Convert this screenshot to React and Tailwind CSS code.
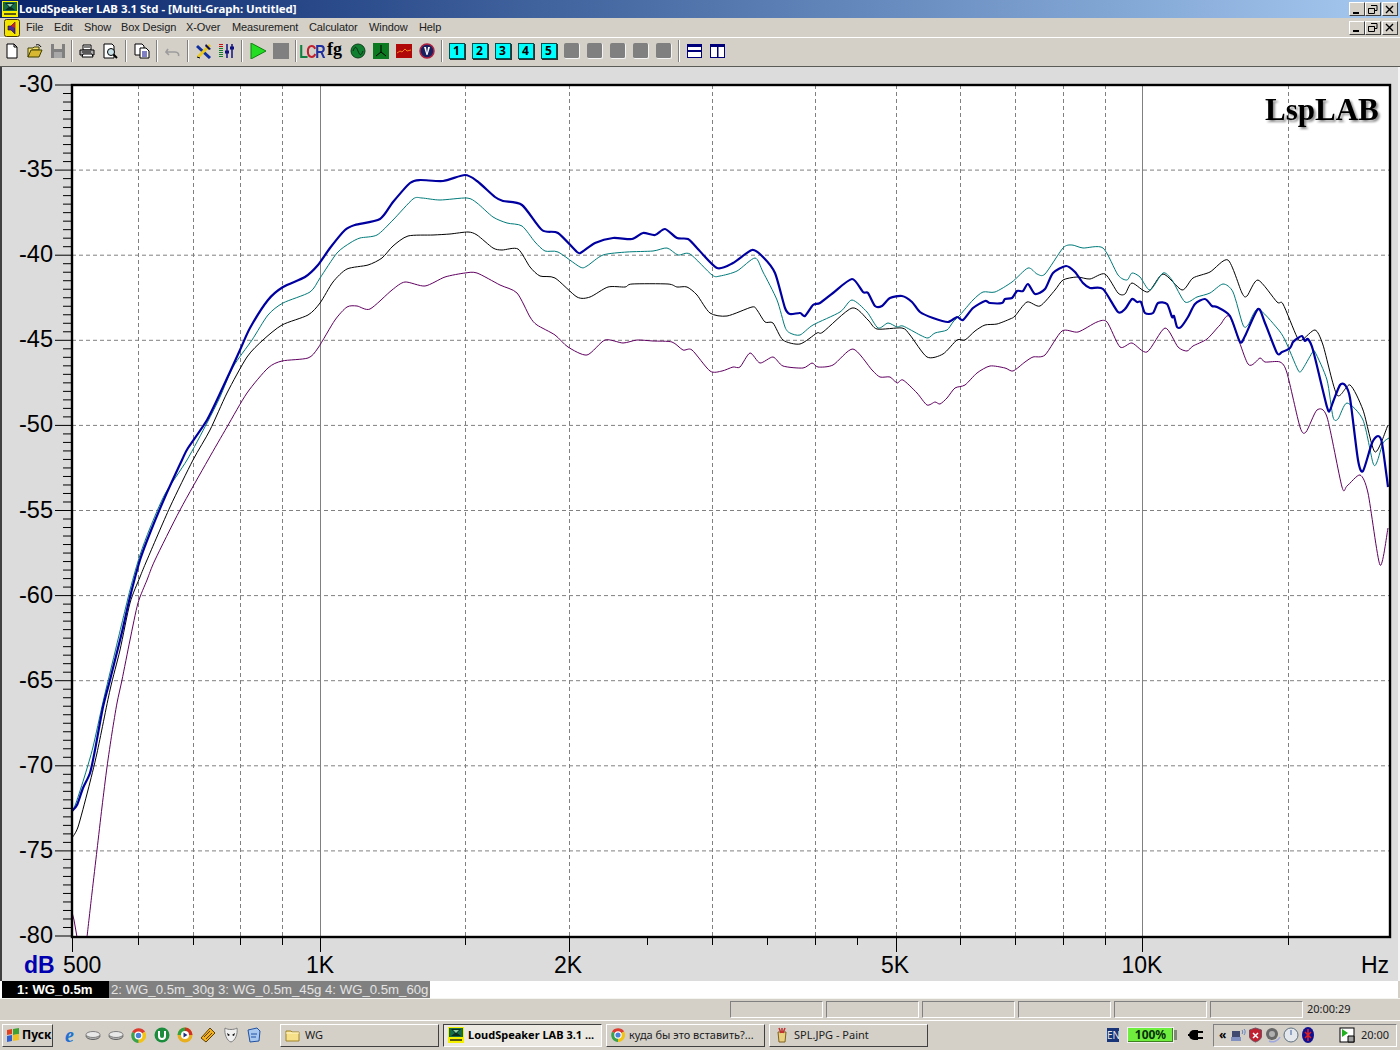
import React from 'react';

const ui = { fontFamily: '"Noto Sans", "Liberation Sans", sans-serif' };

const blue = '72,811 77,805 83,788 90,773 95,750 103,707 110,680 115,660 122,632 130,597 140,560 150,533 165,497 182,460 188,448 207,420 223,387 240,350 250,328 268,300 283,287 305,277 318,265 330,248 345,230 355,225 380,219 393,202 410,183 420,180 443,181 465,175 477,181 495,197 503,201 522,205 542,230 558,233 577,252 582,252 595,243 613,238 632,239 643,233 655,235 665,229 677,238 688,239 697,248 717,268 733,263 752,250 763,257 775,273 785,308 790,314 800,313 805,316 813,305 820,303 833,293 852,279 863,292 868,293 875,306 882,306 890,298 902,296 912,302 920,312 933,318 948,322 957,317 963,320 973,308 985,301 990,303 1002,303 1005,299 1012,298 1017,291 1023,291 1028,284 1035,294 1045,289 1053,273 1066,266 1075,272 1083,283 1090,288 1103,289 1118,312 1125,309 1132,299 1137,302 1141,302 1145,313 1153,313 1158,303 1167,304 1172,317 1174,316 1177,327 1181,327 1188,317 1195,304 1205,299 1212,306 1217,307 1230,316 1240,342 1245,336 1258,309 1265,323 1277,353 1282,352 1290,348 1293,342 1298,338 1302,336 1305,341 1308,339 1313,350 1327,407 1330,410 1333,402 1340,385 1345,385 1350,398 1358,460 1363,471 1372,443 1378,436 1382,443 1388,487';
const teal = '72,812 76,803 85,775 93,747 103,702 115,652 130,590 140,555 150,528 165,494 187,460 207,423 220,397 233,367 252,340 268,315 283,303 310,292 320,278 337,253 350,243 360,238 377,235 393,220 413,199 422,198 440,200 467,198 477,203 493,217 507,223 522,226 535,242 545,251 558,252 580,267 587,266 603,255 627,252 653,251 667,248 678,255 690,254 712,275 720,276 737,271 755,258 763,272 777,300 785,327 790,333 800,335 813,325 840,312 852,300 867,312 878,328 888,323 897,327 903,326 920,335 928,338 935,333 947,330 953,322 960,315 973,300 983,292 995,292 1012,282 1028,268 1037,274 1045,274 1063,248 1072,245 1083,248 1103,248 1118,275 1127,280 1132,273 1140,277 1150,290 1163,273 1172,280 1185,302 1197,297 1210,293 1223,284 1233,292 1243,325 1248,325 1258,309 1277,328 1285,340 1298,370 1302,370 1312,353 1315,352 1327,380 1333,417 1338,419 1347,403 1363,420 1373,463 1377,462 1383,443 1389,438';
const black = '72,838 78,827 88,790 97,753 110,690 120,650 130,603 140,577 147,560 170,507 193,460 210,430 227,393 247,357 263,340 282,325 308,315 320,303 333,282 347,269 368,265 382,258 393,246 408,236 433,235 450,234 468,232 477,235 493,248 502,250 518,249 530,267 540,276 555,278 577,297 590,297 608,287 625,287 632,284 668,284 677,287 687,287 697,295 710,313 727,316 752,307 757,310 765,322 773,323 783,340 800,344 817,333 823,332 852,308 868,320 877,329 902,328 910,335 927,357 943,354 957,340 965,340 975,331 985,325 997,324 1010,319 1015,316 1027,302 1040,306 1055,290 1063,280 1077,277 1090,279 1105,274 1118,293 1125,294 1132,283 1148,292 1163,274 1182,290 1193,278 1210,272 1228,260 1242,293 1247,296 1258,280 1277,302 1283,304 1297,337 1302,340 1315,330 1323,345 1337,395 1350,385 1363,410 1375,452 1388,425';
const purple = '87,937 92,893 97,850 102,807 107,767 112,733 117,703 122,680 130,640 138,603 147,580 155,560 180,510 208,460 227,427 247,393 268,368 282,361 308,358 318,348 335,320 347,307 357,306 370,309 392,290 405,282 425,286 445,277 465,273 477,273 500,285 517,293 530,317 537,325 555,335 568,347 587,355 605,340 623,343 637,340 653,341 672,342 683,350 692,350 710,371 722,371 733,367 740,367 750,353 760,363 773,357 783,366 803,368 812,363 818,367 833,365 853,349 872,370 880,377 890,377 897,383 903,380 917,393 927,405 935,402 940,404 947,398 955,388 965,385 977,373 990,366 1005,368 1013,371 1025,362 1033,357 1045,355 1062,331 1078,332 1097,322 1107,322 1120,347 1132,343 1147,352 1165,328 1178,347 1187,351 1193,346 1207,339 1220,325 1230,317 1248,364 1260,358 1265,362 1280,362 1287,373 1300,427 1306,432 1317,410 1327,417 1342,487 1347,486 1360,475 1368,493 1380,565 1388,528';

// spline through the digitized points so that peaks stay where they were read
function smooth(str) {
  const p = str.split(' ').map(s => s.split(',').map(Number));
  let d = `M${p[0][0]} ${p[0][1]}`;
  for (let i = 0; i < p.length - 1; i++) {
    const a = p[i - 1] || p[i];
    const b = p[i];
    const c = p[i + 1];
    const e = p[i + 2] || c;
    const c1x = b[0] + (c[0] - a[0]) / 8;
    const c1y = b[1] + (c[1] - a[1]) / 8;
    const c2x = c[0] - (e[0] - b[0]) / 8;
    const c2y = c[1] - (e[1] - b[1]) / 8;
    d += `C${c1x} ${c1y} ${c2x} ${c2y} ${c[0]} ${c[1]}`;
  }
  return d;
}

const gridX = [138, 193, 240, 282, 465, 569, 712, 815, 896, 960, 1015, 1063, 1105, 1288];
const bottomTicks = [138, 193, 240, 282, 465, 647, 712, 767, 815, 857, 960, 1015, 1063, 1105, 1288];
const longTicks = [72, 320, 569, 896, 1142];
const dbLabels = [-30, -35, -40, -45, -50, -55, -60, -65, -70, -75, -80];
const yOf = i => 85 + i * 85.1;

function Chart() {
  const sans = '"Liberation Sans", Arial, sans-serif';
  const minor = [];
  for (let i = 1; i < 100; i++) if (i % 10 !== 0) minor.push(85 + i * 8.51);
  return (
    <svg width="1396" height="914" viewBox="2 67 1396 914" className="block">
      <rect x="72" y="85" width="1318" height="852" fill="#fff" />
      {dbLabels.slice(1, -1).map((d, i) => (
        <line key={d} x1="72" x2="1390" y1={yOf(i + 1)} y2={yOf(i + 1)} stroke="#808080" strokeDasharray="4 3" />
      ))}
      {gridX.map(x => (
        <line key={x} x1={x + 0.5} x2={x + 0.5} y1="85" y2="937" stroke="#808080" strokeDasharray="4 3" />
      ))}
      <line x1="320.5" x2="320.5" y1="85" y2="937" stroke="#808080" />
      <line x1="1142.5" x2="1142.5" y1="85" y2="937" stroke="#808080" />

      {minor.map(y => <line key={y} x1="63" x2="72" y1={y} y2={y} stroke="#000" />)}
      {dbLabels.map((d, i) => (
        <g key={d}>
          <line x1="55" x2="72" y1={yOf(i)} y2={yOf(i)} stroke="#000" />
          <text x="53" y={yOf(i) + 7} textAnchor="end" fontFamily={sans} fontSize="23.5" fill="#000">{d}</text>
        </g>
      ))}
      {bottomTicks.map(x => <line key={x} x1={x + 0.5} x2={x + 0.5} y1="937" y2="945" stroke="#000" />)}
      {longTicks.map(x => <line key={x} x1={x + 0.5} x2={x + 0.5} y1="937" y2="952" stroke="#000" />)}

      <svg x="72" y="85" width="1318" height="852" viewBox="72 85 1318 852">
        <polyline points="72,912 74,920 77,937" fill="none" stroke="#600060" />
        <path d={smooth(purple)} fill="none" stroke="#600060" />
        <path d={smooth(black)} fill="none" stroke="#000" />
        <path d={smooth(teal)} fill="none" stroke="#007a7a" />
        <path d={smooth(blue)} fill="none" stroke="#0000a0" strokeWidth="2.2" />
      </svg>

      <rect x="72" y="85" width="1318" height="852" fill="none" stroke="#000" strokeWidth="2.4" />
      <text x="1265" y="120" fontFamily='"Liberation Serif", serif' fontWeight="700" fontSize="31" fill="#000" className="drop-shadow-[2px_2px_1px_#8a8a8a]">LspLAB</text>
      <text x="24" y="973" fontFamily={sans} fontWeight="700" fontSize="23" fill="#0000b0">dB</text>
      <text x="63" y="973" fontFamily={sans} fontSize="23" fill="#000">500</text>
      <text x="320" y="973" textAnchor="middle" fontFamily={sans} fontSize="23" fill="#000">1K</text>
      <text x="568" y="973" textAnchor="middle" fontFamily={sans} fontSize="23" fill="#000">2K</text>
      <text x="895" y="973" textAnchor="middle" fontFamily={sans} fontSize="23" fill="#000">5K</text>
      <text x="1142" y="973" textAnchor="middle" fontFamily={sans} fontSize="23" fill="#000">10K</text>
      <text x="1361" y="973" fontFamily={sans} fontSize="23" fill="#000">Hz</text>
    </svg>
  );
}

function Ico({ w = 16, h = 16, children }) {
  return <svg width={w} height={h} viewBox={`0 0 ${w} ${h}`} className="block shrink-0">{children}</svg>;
}

function AppIcon({ size = 16 }) {
  return (
    <svg width={size} height={size} viewBox="0 0 16 16" className="block shrink-0">
      <rect width="16" height="16" fill="#f4f000" />
      <rect x="1" y="1" width="14" height="9" fill="#146c4a" />
      <path d="M3 2h10L9 6l4 3H3l4-3z" fill="#0c2c20" />
      <path d="M5 3h6L8 6z" fill="#8fd0a8" />
      <rect x="2" y="12" width="12" height="2" fill="#5a5a10" />
    </svg>
  );
}

function MdiIcon() {
  return (
    <Ico w={16} h={18}>
      <rect x="0.5" y="0.5" width="15" height="17" rx="2" fill="#f2e400" stroke="#4a3a00" />
      <path d="M4 7h3l4-4v12l-4-4H4z" fill="#4a2a90" stroke="#200040" strokeWidth="0.6" />
      <path d="M7 7l4-4v6z" fill="#d02020" />
    </Ico>
  );
}

function Chrome({ size = 14 }) {
  return (
    <svg width={size} height={size} viewBox="0 0 16 16" className="block shrink-0">
      <path d="M8 8L1.2 4.2A8 8 0 0 1 15 4z" fill="#dc3b2e" />
      <path d="M8 8L15 4A8 8 0 0 1 8 16z" fill="#f2c316" />
      <path d="M8 8L8 16A8 8 0 0 1 1.2 4.2z" fill="#3aa24a" />
      <circle cx="8" cy="8" r="3.6" fill="#4a80d8" stroke="#fff" strokeWidth="1.3" />
    </svg>
  );
}

function Folder({ size = 16 }) {
  return (
    <svg width={size} height={size} viewBox="0 0 16 16" className="block shrink-0">
      <path d="M1 4h5l1 1h7v9H1z" fill="#f7e08a" stroke="#a08428" />
      <path d="M1 6h13" stroke="#fff5c8" />
    </svg>
  );
}

function NumBtn({ n }) {
  return (
    <div className="w-[23px] h-[26px] flex items-center justify-center">
      <div className="w-[16px] h-[16px] bg-[#00ffff] border border-[#005050] shadow-[1px_1px_0_#303030] flex items-center justify-center text-[12px] leading-none font-bold text-black">{n}</div>
    </div>
  );
}

function Slot({ children }) {
  return <div className="w-[23px] h-[26px] flex items-center justify-center shrink-0">{children}</div>;
}

function Sep({ w = 8 }) {
  return (
    <div style={{ width: w }} className="h-[26px] flex items-center justify-center shrink-0">
      <div className="w-[2px] h-[22px] border-l border-r border-l-[#808080] border-r-white" />
    </div>
  );
}

function Toolbar() {
  return (
    <div className="h-[28px] flex items-start bg-[#d4d0c8]">
      <Slot><Ico><path d="M3 1h7l3 3v11H3z" fill="#fff" stroke="#000" /><path d="M10 1v3h3" fill="none" stroke="#000" /></Ico></Slot>
      <Slot><Ico><path d="M1 5h5l1-1h5v3H5L1 14z" fill="#f4e070" stroke="#404000" /><path d="M1 14l3-7h11l-3 7z" fill="#d8b830" stroke="#404000" /><path d="M9 2c2-1 4 0 5 2" fill="none" stroke="#000" /></Ico></Slot>
      <Slot><Ico><rect x="1" y="1" width="14" height="14" fill="#808080" /><rect x="4" y="1" width="8" height="5" fill="#d4d0c8" /><rect x="4" y="9" width="8" height="6" fill="#a8a8a8" /></Ico></Slot>
      <Sep w={6} />
      <Slot><Ico><path d="M4 2h8v5H4z" fill="#fff" stroke="#000" /><path d="M1 7h14v5H1z" fill="#b0b0b0" stroke="#000" /><path d="M4 11h9l1 3H3z" fill="#fff" stroke="#000" /><path d="M5 4h6M3 9h9" stroke="#000" /></Ico></Slot>
      <Slot><Ico><path d="M2 1h8l2 2v12H2z" fill="#fff" stroke="#000" /><circle cx="9" cy="9" r="3.5" fill="#c8e0e8" stroke="#000" /><path d="M11.5 11.5L15 15" stroke="#000" strokeWidth="2" /></Ico></Slot>
      <Sep w={9} />
      <Slot><Ico><path d="M1 1h7l2 2v9H1z" fill="#fff" stroke="#000" /><path d="M6 5h6l3 3v7H6z" fill="#fff" stroke="#000" /><path d="M8 9h5M8 11h5M8 13h5" stroke="#00008a" /></Ico></Slot>
      <Sep w={8} />
      <Slot><Ico><path d="M3 6L1 9l3 3M1.5 9H10c3 0 4 2 3.5 4" fill="none" stroke="#9c9c9c" strokeWidth="1.6" /></Ico></Slot>
      <Sep w={8} />
      <Slot><Ico><path d="M1 3l13 12" stroke="#1030a0" strokeWidth="3" /><path d="M14 2L2 14" stroke="#e8c820" strokeWidth="3" /><path d="M10 1l5 5-2 1-4-4z" fill="#101050" /><path d="M1 14l3 1" stroke="#000" /></Ico></Slot>
      <Slot>
        <Ico>
          <path d="M2 1v4" stroke="#c01010" strokeWidth="4" strokeDasharray="1 1" />
          <path d="M2 5v10" stroke="#108030" strokeWidth="4" strokeDasharray="1 1" />
          <path d="M8 1v14M13 1v14" stroke="#101080" strokeWidth="1.5" />
          <path d="M6 9h4M11 5h4" stroke="#101080" strokeWidth="3" />
        </Ico>
      </Slot>
      <Sep w={8} />
      <Slot><Ico><path d="M1 0l15 8-15 8z" fill="#22dd22" stroke="#108010" /></Ico></Slot>
      <Slot><div className="w-[16px] h-[16px] bg-[#808080]" /></Slot>
      <Sep w={8} />
      <Slot>
        <span className="font-['Liberation_Sans'] font-bold text-[19px] leading-none tracking-[-2px] scale-x-75">
          <span className="text-[#108040]">L</span><span className="text-[#c02030]">C</span><span className="text-[#2030a0]">R</span>
        </span>
      </Slot>
      <Slot><span className="font-['Liberation_Serif'] font-bold text-[18px] leading-none -mt-1 text-black">fg</span></Slot>
      <Slot><Ico><circle cx="8" cy="8" r="7" fill="#108030" stroke="#0c4018" /><path d="M3 8c2-5 3-5 5 0s3 5 5 0" fill="none" stroke="#0a2a10" /></Ico></Slot>
      <Slot><Ico><rect width="16" height="16" fill="#0c7a20" /><path d="M8 2v7L3 13M8 9l5 4" fill="none" stroke="#000" /></Ico></Slot>
      <Slot><Ico w={16} h={14}><rect width="16" height="14" fill="#b00808" /><path d="M1 9l3-2 2 1 3-3 2 2 4-1" fill="none" stroke="#f08020" /></Ico></Slot>
      <Slot><Ico><circle cx="8" cy="8" r="7" fill="#182060" stroke="#b02040" strokeWidth="1.5" /><path d="M5 4h2l1 6 1-6h2l-2.5 8h-1z" fill="#fff" /></Ico></Slot>
      <Sep w={7} />
      {[1, 2, 3, 4, 5].map(n => <NumBtn key={n} n={n} />)}
      {[6, 7, 8, 9, 10].map(n => (
        <Slot key={n}><div className="w-[16px] h-[16px] rounded-[2px] bg-[#808080] border-r border-b border-[#f4f4f4]" /></Slot>
      ))}
      <Sep w={8} />
      <Slot><Ico><rect x="0.5" y="1.5" width="14" height="13" fill="#fff" stroke="#00007a" /><rect x="1" y="1" width="14" height="3" fill="#00007a" /><rect x="1" y="7" width="14" height="2" fill="#00007a" /></Ico></Slot>
      <Slot><Ico><rect x="0.5" y="1.5" width="14" height="13" fill="#fff" stroke="#00007a" /><rect x="1" y="1" width="14" height="3" fill="#00007a" /><rect x="7" y="2" width="1.5" height="13" fill="#00007a" /></Ico></Slot>
    </div>
  );
}

function WinBtn({ kind }) {
  return (
    <div className="w-[16px] h-[14px] bg-[#d4d0c8] border border-t-white border-l-white border-r-[#404040] border-b-[#404040] flex items-center justify-center">
      <svg width="10" height="9" viewBox="0 0 10 9" className="block">
        {kind === 'min' && <rect x="1" y="7" width="6" height="2" fill="#000" />}
        {kind === 'max' && <path d="M3 .5h6v5H7M.5 3.5h6v5h-6zM.5 3.5h6M3 .5h6" fill="none" stroke="#000" />}
        {kind === 'close' && <path d="M1 1l7 7M8 1L1 8" stroke="#000" strokeWidth="1.4" />}
      </svg>
    </div>
  );
}

function WinBtns() {
  return (
    <div className="flex ml-auto mr-[2px]">
      <WinBtn kind="min" />
      <WinBtn kind="max" />
      <div className="ml-[1px]"><WinBtn kind="close" /></div>
    </div>
  );
}

const menus = [
  ['File', 'w-[28px]'], ['Edit', 'w-[30px]'], ['Show', 'w-[37px]'], ['Box Design', 'w-[65px]'],
  ['X-Over', 'w-[46px]'], ['Measurement', 'w-[77px]'], ['Calculator', 'w-[60px]'], ['Window', 'w-[50px]'], ['Help', 'w-[30px]'],
];

function TaskBtn({ w, active, icon, children }) {
  return (
    <div
      style={{ width: w }}
      className={active
        ? 'h-[23px] mr-[4px] flex items-center gap-[4px] pl-[4px] bg-[#ece9e2] border border-t-[#404040] border-l-[#404040] border-r-white border-b-white font-bold text-black overflow-hidden'
        : 'h-[23px] mr-[4px] flex items-center gap-[4px] pl-[4px] bg-[#d4d0c8] border border-t-white border-l-white border-r-[#404040] border-b-[#404040] text-[#202020] overflow-hidden'}
    >
      {icon}
      <span className="whitespace-nowrap">{children}</span>
    </div>
  );
}

function StatusPanel() {
  return <div className="w-[93px] h-[17px] mr-[3px] border border-t-[#808080] border-l-[#808080] border-r-white border-b-white" />;
}

function Quick({ children }) {
  return <div className="w-[23px] flex items-center justify-center">{children}</div>;
}

function Taskbar() {
  return (
    <div className="h-[29px] border-t border-white bg-[#d4d0c8] flex items-center pl-[2px] text-[11px]">
      <div className="w-[51px] h-[23px] flex items-center gap-[2px] pl-[3px] border border-t-white border-l-white border-r-[#404040] border-b-[#404040] font-bold text-[12px] text-black">
        <Ico w={14} h={14}>
          <path d="M1 2l5-1v5l-5 1z" fill="#e04020" /><path d="M7 1l6-1v6l-6 1z" fill="#40a030" />
          <path d="M1 8l5-1v6l-5 1z" fill="#3060d0" /><path d="M7 7l6-1v6l-6 1z" fill="#f0c020" />
        </Ico>
        <span>Пуск</span>
      </div>
      <div className="flex ml-[5px] w-[220px]">
        <Quick><span className="font-['Liberation_Serif'] italic font-bold text-[20px] leading-none text-[#2070d0]">e</span></Quick>
        <Quick><Ico><ellipse cx="8" cy="9" rx="7" ry="3.5" fill="#b8b8b8" stroke="#606060" /><ellipse cx="8" cy="7.5" rx="7" ry="3" fill="#e8e8e8" stroke="#808080" /></Ico></Quick>
        <Quick><Ico><ellipse cx="8" cy="9" rx="7" ry="3.5" fill="#b8b8b8" stroke="#606060" /><ellipse cx="8" cy="7.5" rx="7" ry="3" fill="#e8e8e8" stroke="#808080" /></Ico></Quick>
        <Quick><Chrome size={15} /></Quick>
        <Quick><Ico><circle cx="8" cy="8" r="7.5" fill="#1a8c3c" /><path d="M5 4v5a3 3 0 0 0 6 0V4" fill="none" stroke="#fff" strokeWidth="2" /></Ico></Quick>
        <Quick><Ico><circle cx="8" cy="8" r="7.5" fill="#e8b020" /><path d="M8 .5a7.5 7.5 0 0 1 7.5 7.5H8z" fill="#d03020" /><path d="M.5 8A7.5 7.5 0 0 1 8 .5V8z" fill="#30a040" /><circle cx="8" cy="8" r="4" fill="#fff" /><path d="M6.5 5.5l4 2.5-4 2.5z" fill="#203080" /></Ico></Quick>
        <Quick><Ico><path d="M1 11L10 1l5 5-9 9z" fill="#f0b020" stroke="#604000" /><path d="M4 10l6-6M6 12l6-6" stroke="#604000" /></Ico></Quick>
        <Quick><Ico><path d="M2 1c3 2 9 2 12 0 1 6-2 13-6 14C4 14 1 7 2 1z" fill="#f0f0f0" stroke="#808080" /><path d="M4 6l3 2-2 1zM12 6L9 8l2 1z" fill="#000" /></Ico></Quick>
        <Quick><Ico><path d="M2 3l9-2 3 3-1 10-9 1z" fill="#a8c8f0" stroke="#2050a0" /><path d="M5 7h6M5 10h5" stroke="#2050a0" /></Ico></Quick>
      </div>
      <div className="ml-[2px] flex">
        <TaskBtn w={159} icon={<Folder />}>WG</TaskBtn>
        <TaskBtn w={159} active icon={<AppIcon />}>LoudSpeaker LAB 3.1 ...</TaskBtn>
        <TaskBtn w={159} icon={<Chrome />}>куда бы это вставить?...</TaskBtn>
        <TaskBtn w={159} icon={<Ico><path d="M4 5h8l-1 10H5z" fill="#e8d080" stroke="#806020" /><path d="M5 1l2 5M11 1L9 6M8 1v5" stroke="#c03030" strokeWidth="1.5" /></Ico>}>SPL.JPG - Paint</TaskBtn>
      </div>
      <div className="ml-auto flex items-center">
        <div className="w-[12px] h-[14px] bg-[#18357a] text-[#e8e8e8] text-[10px] leading-[14px] text-center overflow-hidden">EN</div>
        <div className="ml-[8px] w-[50px] h-[16px] flex">
          <div className="w-[47px] h-[16px] bg-[#70ee40] border border-[#f0f0f0] shadow-[inset_-1px_-1px_0_#408020] flex items-center justify-center font-bold text-[12px] leading-none text-[#083008]">100%</div>
          <div className="w-[3px] h-[10px] mt-[3px] bg-[#808878]" />
        </div>
        <div className="ml-[11px] mr-[9px]">
          <Ico>
            <path d="M6 3h4v10H6a5 5 0 0 1 0-10z" fill="#000" />
            <path d="M10 5h5M10 11h5" stroke="#000" strokeWidth="2" /><path d="M0 8h3" stroke="#000" strokeWidth="2" />
          </Ico>
        </div>
        <div className="w-[184px] h-[23px] mr-[3px] flex items-center pl-[5px] border border-t-[#808080] border-l-[#808080] border-r-white border-b-white">
          <span className="w-[11px] font-bold text-[12px] leading-none">«</span>
          <div className="flex items-center gap-[2px]">
            <Ico w={16} h={16}><rect x="2" y="4" width="8" height="6" fill="#404a70" /><rect x="1" y="10" width="10" height="4" fill="#8090c0" /><path d="M12 3c1 1 1 3 0 4M14 2c1.5 1.5 1.5 4 0 6" fill="none" stroke="#6080c0" /></Ico>
            <Ico w={15} h={16}><path d="M7.5 1l6 2v6c0 3-3 5-6 6-3-1-6-3-6-6V3z" fill="#c02030" stroke="#705060" /><path d="M5 6l5 5M10 6l-5 5" stroke="#fff" strokeWidth="1.5" /></Ico>
            <Ico w={16} h={16}><circle cx="7" cy="7" r="6" fill="#686868" /><circle cx="7" cy="7" r="3" fill="#b0b0b0" /><path d="M4 14c4 2 9 0 11-4" fill="none" stroke="#a0a8e0" strokeWidth="1.5" /></Ico>
            <Ico w={16} h={16}><circle cx="8" cy="8" r="7" fill="#e4e8ec" stroke="#607080" /><path d="M8 3v5" stroke="#4060a0" /></Ico>
            <Ico w={14} h={16}><ellipse cx="7" cy="8" rx="6" ry="8" fill="#101090" /><path d="M7 2v12M4 5l6 6M10 5l-6 6" stroke="#e02020" strokeWidth="1.5" /></Ico>
          </div>
          <div className="ml-[24px]">
            <Ico><rect x="1" y="1" width="14" height="14" fill="#fff" stroke="#000" /><path d="M3 2v8l6-4z" fill="#20b020" /><path d="M9 9h6v6H9z" fill="#a0a0a0" stroke="#000" /></Ico>
          </div>
          <span className="ml-[6px] text-[11px] text-[#202020]">20:00</span>
        </div>
      </div>
    </div>
  );
}

export default function App() {
  return (
    <div style={ui} className="w-[1400px] h-[1050px] flex flex-col overflow-hidden bg-[#d4d0c8] text-[11px] text-black">
      <div className="h-[18px] flex items-center pl-[2px] bg-gradient-to-r from-[#0a246a] to-[#a6caf0]">
        <AppIcon />
        <span className="ml-[1px] text-[11.4px] font-bold text-white whitespace-nowrap">LoudSpeaker LAB 3.1 Std - [Multi-Graph: Untitled]</span>
        <WinBtns />
      </div>
      <div className="h-[20px] flex items-center pl-[4px] bg-[#d4d0c8] border-b border-white">
        <MdiIcon />
        <div className="flex ml-[6px] font-['Liberation_Sans'] tracking-[-0.1px]">
          {menus.map(([m, w]) => <span key={m} className={`${w} text-[#202020] whitespace-nowrap`}>{m}</span>)}
        </div>
        <WinBtns />
      </div>
      <Toolbar />
      <div className="h-[1px] bg-[#5a5a56]" />
      <div className="h-[914px] flex bg-[#dcdcdc] border-l-2 border-l-[#404040] border-r-2 border-r-[#f4f4f4]">
        <Chart />
      </div>
      <div className="h-[17px] flex items-stretch bg-white pl-[2px] mr-[2px] font-['Liberation_Sans'] text-[13.2px] leading-[17px] whitespace-nowrap">
        <div className="w-[107px] bg-black text-white font-bold pl-[15px]">1: WG_0.5m</div>
        <div className="w-[321px] bg-[#808080] text-[#e4e4e4] pl-[2px]">2: WG_0.5m_30g 3: WG_0.5m_45g 4: WG_0.5m_60g</div>
      </div>
      <div className="h-[1px] bg-[#f4f4f0]" />
      <div className="h-[21px] flex items-center pl-[730px] text-[11px] text-[#202020]">
        {[1, 2, 3, 4, 5, 6].map(n => <StatusPanel key={n} />)}
        <span className="ml-[1px]">20:00:29</span>
      </div>
      <Taskbar />
    </div>
  );
}
